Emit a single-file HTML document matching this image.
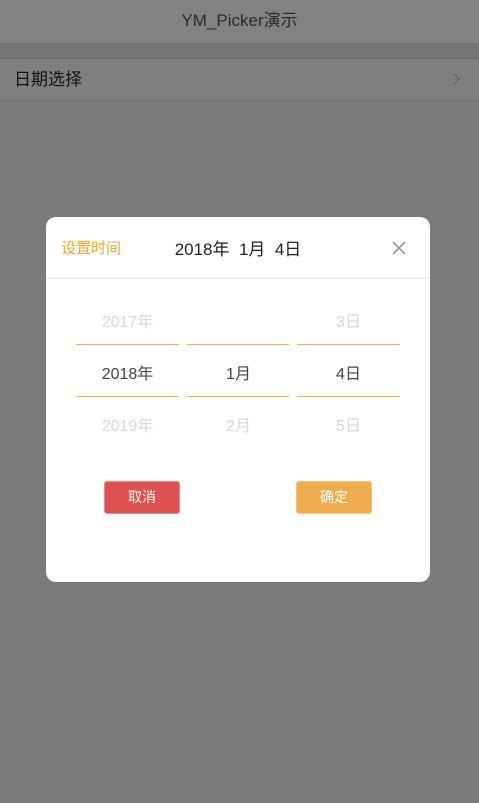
<!DOCTYPE html>
<html><head><meta charset="utf-8"><style>
*{margin:0;padding:0;box-sizing:border-box}
body{width:479px;height:803px;background:#7b7b7d;font-family:"Liberation Sans","Noto Sans CJK SC",sans-serif;position:relative;overflow:hidden}
.hdr{position:absolute;left:0;top:0;width:479px;height:44px;background:#828282;border-bottom:1px solid #737373;text-align:center;line-height:42px;font-size:17px;color:#2a2a2a}
.gap{position:absolute;left:0;top:44px;width:479px;height:15px;background:#767676;border-bottom:1px solid #6f6f6f}
.row{position:absolute;left:0;top:59px;width:479px;height:42px;background:#7f7f7f;border-bottom:1px solid #737373;font-size:17px;line-height:42px;padding-left:14px;color:#111}
.arr{position:absolute;right:21px;top:16px;width:8px;height:8px;border-top:1px solid #5f5f5f;border-right:1px solid #5f5f5f;transform:rotate(45deg)}
.modal{position:absolute;left:46px;top:217px;width:384px;height:365px;background:#fff;border-radius:10px}
.t1{position:absolute;left:15px;top:20px;font-size:15px;color:#f5a623}
.t2{position:absolute;left:0;width:384px;text-align:center;top:18px;font-size:17px;color:#222}
.x{position:absolute;left:346px;top:24px;width:14px;height:14px}
.hl{position:absolute;left:0;top:60px;width:384px;height:2px;background:#eee}
.c{position:absolute;font-size:16px;text-align:center;width:103px}
.l{position:absolute;height:1px;background:#f0b84a}
.g{color:#d8d8d8}.d{color:#444}
.btn{position:absolute;top:264px;width:76px;height:33px;border-radius:3px;color:#fff;font-size:14px;text-align:center;line-height:31px}
</style></head><body>
<div class="hdr">YM_Picker演示</div>
<div class="gap"></div>
<div class="row">日期选择<span class="arr"></span></div>
<div class="modal">
<div class="t1">设置时间</div>
<div class="t2">2018年&nbsp;&nbsp;1月&nbsp;&nbsp;4日</div>
<svg class="x" viewBox="0 0 14 14"><path d="M1 1L13 13M13 1L1 13" stroke="#888" stroke-width="1.3"/></svg>
<div class="hl"></div>
<div class="c g" style="left:30px;top:91px">2017年</div>
<div class="c g" style="left:251px;top:91px">3日</div>
<div class="c d" style="left:30px;top:143px">2018年</div>
<div class="c d" style="left:141px;top:143px">1月</div>
<div class="c d" style="left:251px;top:143px">4日</div>
<div class="c g" style="left:30px;top:195px">2019年</div>
<div class="c g" style="left:141px;top:195px">2月</div>
<div class="c g" style="left:251px;top:195px">5日</div>
<div class="l" style="left:30px;top:127px;width:103px"></div>
<div class="l" style="left:141px;top:127px;width:102px"></div>
<div class="l" style="left:251px;top:127px;width:103px"></div>
<div class="l" style="left:30px;top:179px;width:103px"></div>
<div class="l" style="left:141px;top:179px;width:102px"></div>
<div class="l" style="left:251px;top:179px;width:103px"></div>
<div class="btn" style="left:58px;background:#dd5250;border:1px solid #e88">取消</div>
<div class="btn" style="left:250px;background:#f0ad4e;border:1px solid #f5c27a">确定</div>
</div>
</body></html>
